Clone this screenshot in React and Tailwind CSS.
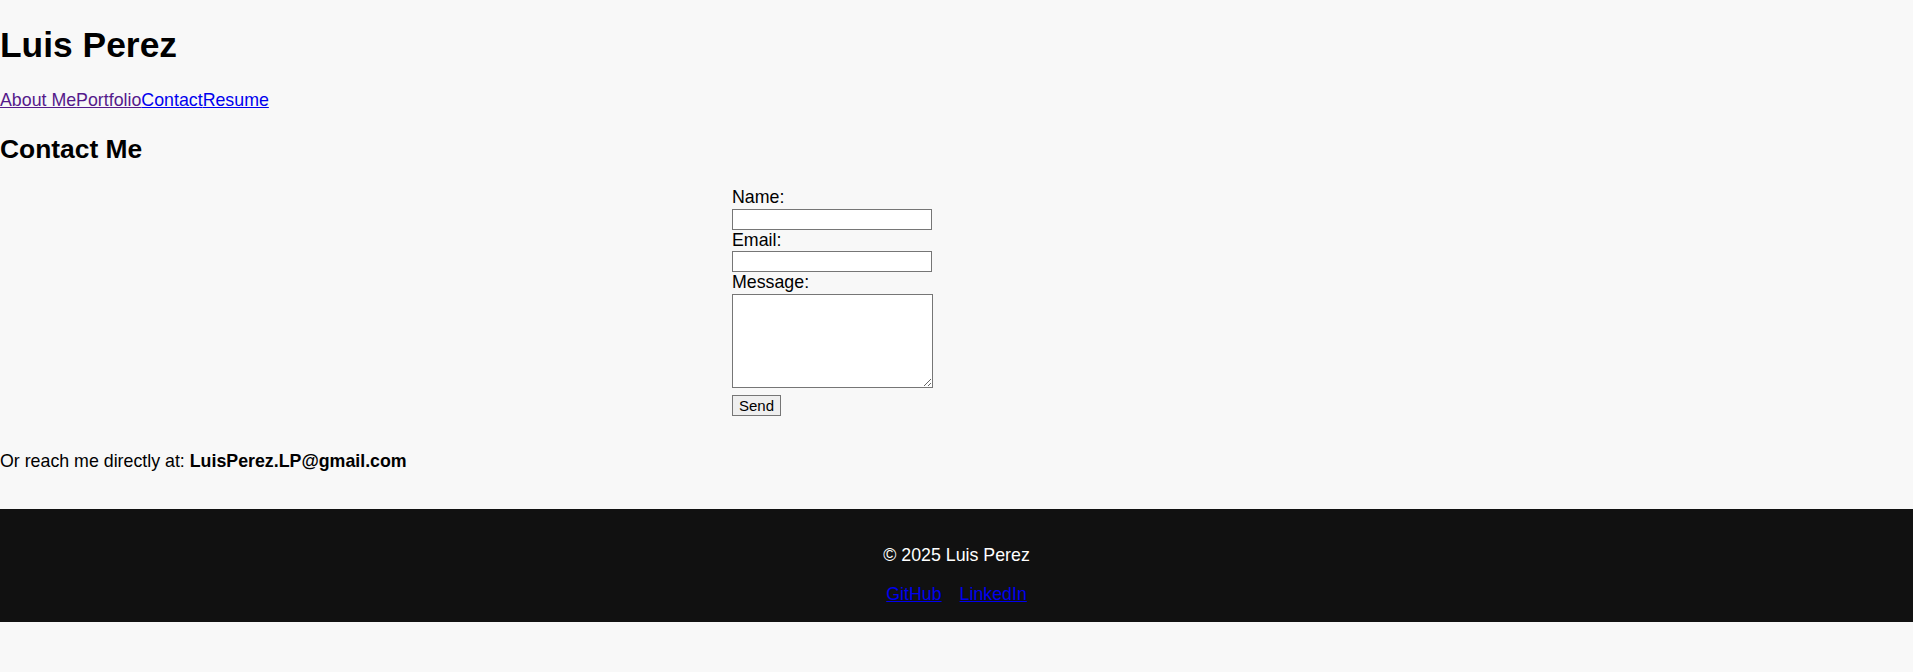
import React, { useState } from 'react';

const links = [
    { label: 'About Me', visited: true },
    { label: 'Portfolio', visited: true },
    { label: 'Contact', visited: false },
    { label: 'Resume', visited: false },
];

export default function App() {
    const [form, setForm] = useState({ name: '', email: '', message: '' });

    const handleChange = (e) => {
        setForm({ ...form, [e.target.name]: e.target.value });
    };

    return (
        <div className="flow-root min-h-screen bg-[#f8f8f8] text-black font-['Liberation_Sans',Arial,sans-serif] text-[17.8px]">
            {/* header */}
            <header>
                <h1 className="mt-[25px] mb-[25px] text-[35.4px] leading-[40px] font-bold">Luis Perez</h1>
                <nav className="leading-[20px]">
                    {links.map((link) => (
                        <a
                            key={link.label}
                            href="#"
                            className={`underline ${link.visited ? 'text-[#551a8b]' : 'text-[#0000ee]'}`}
                        >
                            {link.label}
                        </a>
                    ))}
                </nav>
            </header>

            <section>
                <h2 className="mt-[24px] text-[26.4px] leading-[30px] font-bold">Contact Me</h2>

                <form className="mx-auto mt-[23px] w-[449px]" onSubmit={(e) => e.preventDefault()}>
                    <label className="block leading-[20px]">Name:</label>
                    <input
                        name="name"
                        value={form.name}
                        onChange={handleChange}
                        className="block mt-[2px] w-[200px] h-[21px] border border-[#767676] bg-white px-[2px] text-[14.67px]"
                    />
                    <label className="block leading-[20px]">Email:</label>
                    <input
                        name="email"
                        type="email"
                        value={form.email}
                        onChange={handleChange}
                        className="block mt-[1px] w-[200px] h-[21px] border border-[#767676] bg-white px-[2px] text-[14.67px]"
                    />
                    <label className="block leading-[20px]">Message:</label>
                    <textarea
                        name="message"
                        value={form.message}
                        onChange={handleChange}
                        className="block mt-[2px] w-[201px] h-[94px] border border-[#767676] bg-white px-[2px] text-[14.67px]"
                    />
                    <button
                        type="submit"
                        className="block mt-[7px] h-[21px] px-[6px] border border-[#767676] bg-[#efefef] text-[15px] leading-[17px]"
                    >
                        Send
                    </button>
                </form>

                <p className="mt-[35px] leading-[20px]">
                    Or reach me directly at: <strong>LuisPerez.LP@gmail.com</strong>
                </p>
            </section>

            {/* footer */}
            <footer className="mt-[38px] bg-[#111111] text-white text-center pt-[36px] pb-[18px]">
                <p className="leading-[20px]">© 2025 Luis Perez</p>
                <div className="mt-[19px] flex justify-center gap-[18px] leading-[20px]">
                    <a href="#" className="underline text-[#0000ee]">GitHub</a>
                    <a href="#" className="underline text-[#0000ee]">LinkedIn</a>
                </div>
            </footer>
        </div>
    );
}
